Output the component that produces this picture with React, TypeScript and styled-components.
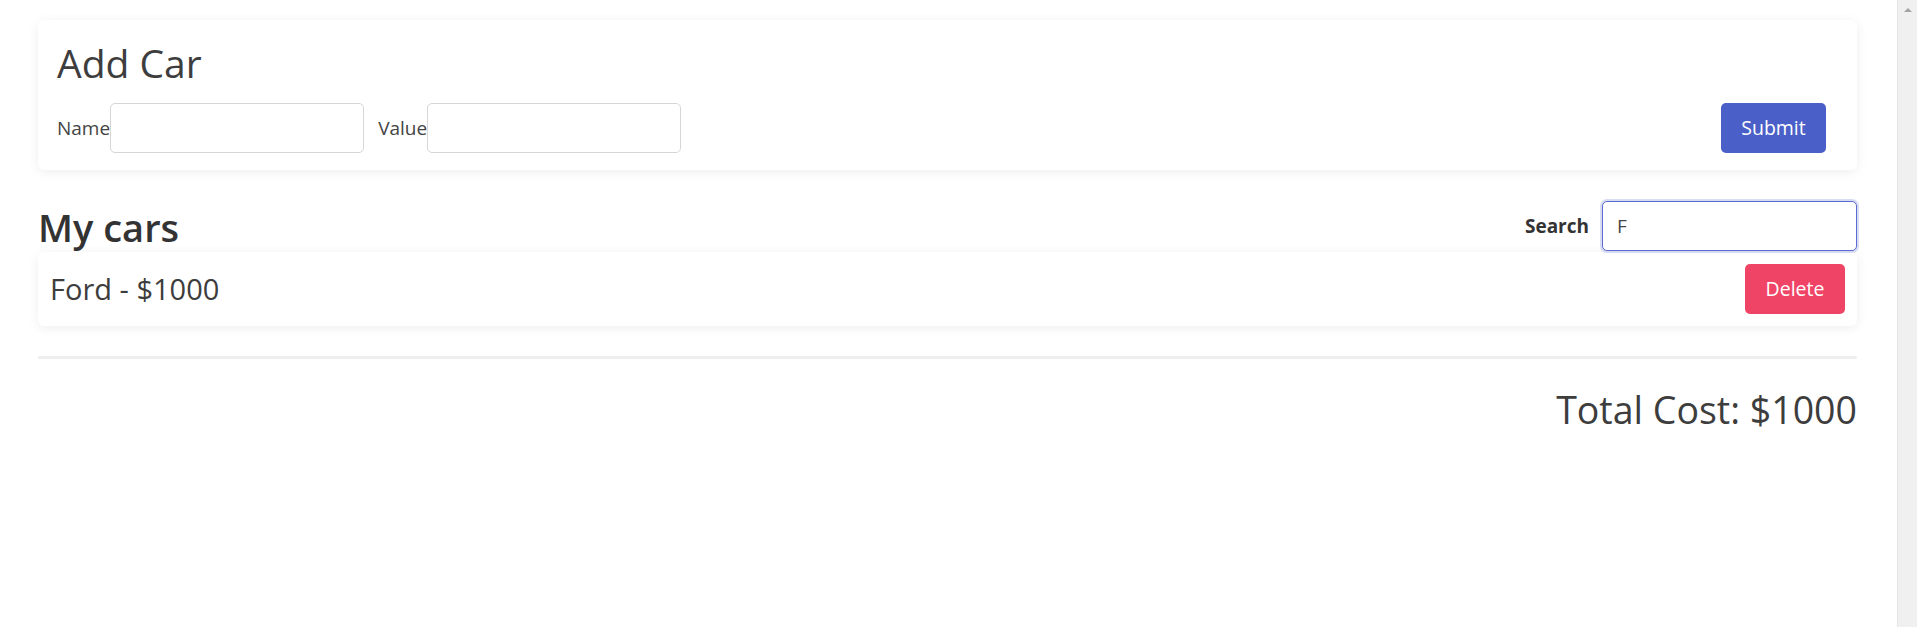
import React, { useState } from 'react';
import styled, { createGlobalStyle } from 'styled-components';

type Car = {
	name: string;
	value: number;
};

const GlobalStyle = createGlobalStyle`
	html, body {
		margin: 0;
		padding: 0;
		background: #fff;
	}
	body {
		font-family: 'Open Sans', 'Noto Sans', sans-serif;
		color: #3a3a3a;
	}
	* {
		box-sizing: border-box;
	}
`;

export default function App() {
	const [cars, setCars] = useState<Car[]>([{ name: 'Ford', value: 1000 }]);
	const [name, setName] = useState('');
	const [value, setValue] = useState('');
	const [search, setSearch] = useState('F');

	const filtered = cars.filter((car) =>
		car.name.toLowerCase().includes(search.toLowerCase()),
	);
	const total = filtered.reduce((sum, car) => sum + car.value, 0);

	const handleSubmit = (e: React.FormEvent) => {
		e.preventDefault();
		if (!name) return;
		setCars([...cars, { name, value: Number(value) || 0 }]);
		setName('');
		setValue('');
	};

	const handleDelete = (index: number) => () => {
		const target = filtered[index];
		setCars(cars.filter((car) => car !== target));
	};

	return (
		<>
			<GlobalStyle />
			<Shell>
				<Page>
					<AddCarCard onSubmit={handleSubmit}>
						<Title>Add Car</Title>
						<FormRow>
							<Field>
								<Label>Name</Label>
								<TextInput value={name} onChange={(e) => setName(e.target.value)} />
							</Field>
							<Field>
								<Label>Value</Label>
								<TextInput value={value} onChange={(e) => setValue(e.target.value)} />
							</Field>
							<Button type="submit" $variant="primary">
								Submit
							</Button>
						</FormRow>
					</AddCarCard>

					<ListHeader>
						<SectionTitle>My cars</SectionTitle>
						<SearchGroup>
							<SearchLabel>Search</SearchLabel>
							<SearchInput value={search} onChange={(e) => setSearch(e.target.value)} />
						</SearchGroup>
					</ListHeader>

					{filtered.map((car, index) => (
						<CarRow key={index}>
							<CarText>
								{car.name} - ${car.value}
							</CarText>
							<Button $variant="danger" onClick={handleDelete(index)}>
								Delete
							</Button>
						</CarRow>
					))}

					<Divider />
					<Total>Total Cost: ${total}</Total>
				</Page>
				<ScrollTrack>
					<ScrollArrow />
				</ScrollTrack>
			</Shell>
		</>
	);
}

const Shell = styled.div`
	display: flex;
	height: 100vh;
	overflow: hidden;
`;

const Page = styled.main`
	flex: 1;
	padding: 20px 40px 0 38px;
`;

const Card = styled.div`
	background: #fff;
	border-radius: 6px;
	box-shadow: 0 2px 12px rgba(0, 0, 0, 0.07);
`;

const AddCarCard = styled(Card).attrs({ as: 'form' })`
	display: block;
	padding: 20px 31px 17px 19px;
`;

const Title = styled.h1`
	margin: 0 0 16px;
	font-size: 39px;
	font-weight: 400;
	line-height: 1.2;
	color: #3d3d3d;
`;

const FormRow = styled.div`
	display: flex;
	align-items: center;
	gap: 14px;
`;

const Field = styled.label`
	display: flex;
	align-items: center;
`;

const Label = styled.span`
	font-size: 19px;
	color: #444;
`;

const TextInput = styled.input`
	width: 254px;
	height: 50px;
	padding: 0 14px;
	border: 1px solid #d6d6d6;
	border-radius: 5px;
	font: inherit;
	font-size: 19px;
	color: #444;
	outline: none;
`;

const Button = styled.button<{ $variant: 'primary' | 'danger' }>`
	height: 50px;
	padding: 0 20px;
	border: none;
	border-radius: 5px;
	font-family: inherit;
	font-size: 19.5px;
	color: #fff;
	cursor: pointer;
	background: ${(p) => (p.$variant === 'primary' ? '#4a5fc8' : '#f04466')};
	min-width: ${(p) => (p.$variant === 'primary' ? '105px' : '100px')};
	margin-left: ${(p) => (p.$variant === 'primary' ? 'auto' : '0')};
`;

const ListHeader = styled.div`
	display: flex;
	justify-content: space-between;
	align-items: flex-end;
	margin-top: 31px;
`;

const SectionTitle = styled.h2`
	margin: 0;
	font-size: 38px;
	font-weight: 600;
	line-height: 48px;
	color: #333;
`;

const SearchGroup = styled.div`
	display: flex;
	align-items: center;
	gap: 13px;
`;

const SearchLabel = styled.span`
	font-size: 19px;
	font-weight: 700;
	color: #333;
`;

const SearchInput = styled.input`
	width: 255px;
	height: 50px;
	padding: 0 14px;
	border: 1px solid #5a6bd2;
	border-radius: 5px;
	box-shadow: 0 0 0 2px rgba(74, 95, 200, 0.22);
	font: inherit;
	font-size: 19px;
	color: #444;
	outline: none;
`;

const CarRow = styled(Card)`
	display: flex;
	justify-content: space-between;
	align-items: center;
	padding: 12px;
	margin-top: 1px;
`;

const CarText = styled.span`
	font-size: 29px;
	color: #3d3d3d;
`;

const Divider = styled.hr`
	margin: 30px 0 0;
	border: none;
	height: 3px;
	background: #eeeeee;
	border-radius: 2px;
`;

const Total = styled.div`
	margin-top: 27px;
	text-align: right;
	font-size: 37.5px;
	line-height: 48px;
	color: #3d3d3d;
`;

const ScrollTrack = styled.div`
	width: 20px;
	flex: none;
	background: #f0f0f0;
	border-left: 1px solid #e6e6e6;
	display: flex;
	justify-content: center;
	padding-top: 8px;
`;

const ScrollArrow = styled.div`
	width: 0;
	height: 0;
	border-left: 4px solid transparent;
	border-right: 4px solid transparent;
	border-bottom: 4px solid #a3a3a3;
`;
